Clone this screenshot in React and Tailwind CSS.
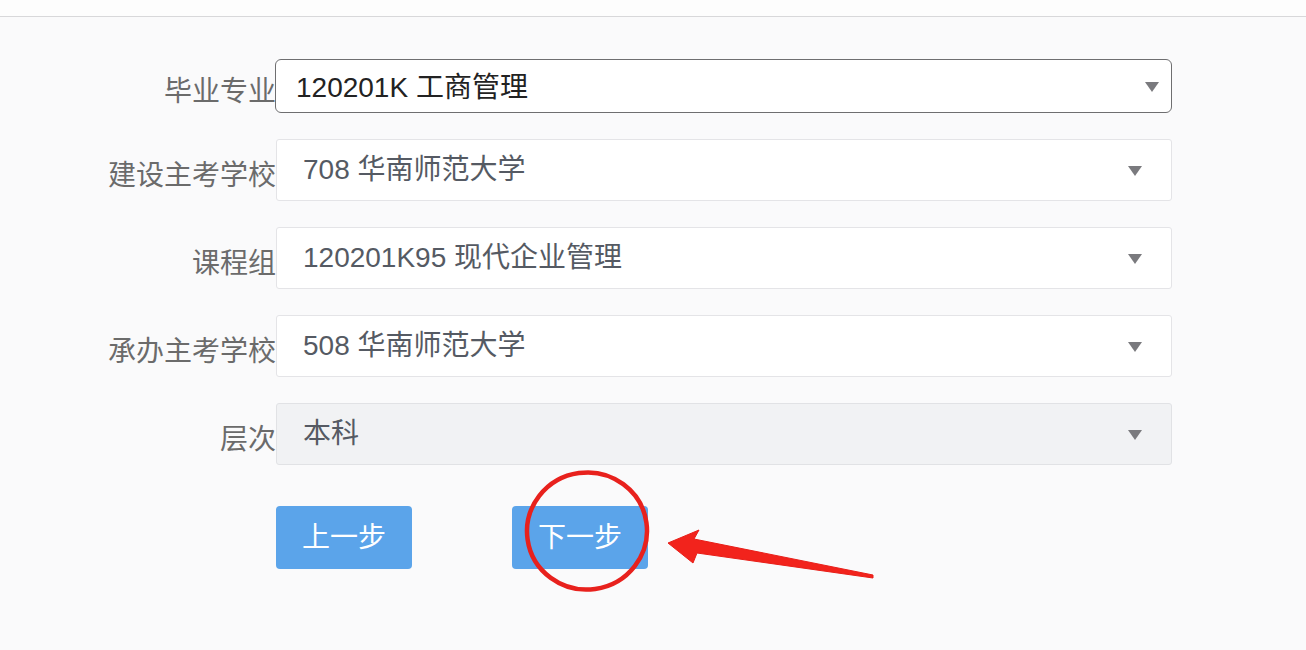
import React from "react";

const font = { fontFamily: '"Liberation Sans", "Noto Sans CJK SC", sans-serif' };

function Caret({ className }) {
  return (
    <svg className={className} width="14" height="10" viewBox="0 0 14 10">
      <path d="M0 0 L14 0 L7 10 Z" fill="#7a7a7e" />
    </svg>
  );
}

function Row({ label, value, variant }) {
  const first = variant === "first";
  const disabled = variant === "disabled";
  return (
    <div className="flex items-center">
      <div className="w-[276px] shrink-0 text-right text-[28px] leading-none text-[#6b6b6b] mt-[12px] whitespace-nowrap overflow-visible">
        {label}
      </div>
      <div
        className={
          first
            ? "relative z-10 -ml-[1px] w-[897px] h-[54px] flex items-center justify-between pl-[20px] pr-[12px] bg-white border border-[#6e6e70] rounded-[6px]"
            : disabled
            ? "w-[896px] h-[62px] flex items-center justify-between pl-[26px] pr-[29px] bg-[#f1f2f4] border border-[#e1e2e5] rounded-[3px]"
            : "w-[896px] h-[62px] flex items-center justify-between pl-[26px] pr-[29px] bg-white border border-[#e4e4e7] rounded-[3px]"
        }
      >
        <span
          className={
            first
              ? "mt-[3px] text-[28px] leading-none text-[#222222]"
              : "text-[28px] leading-none text-[#555a63]"
          }
        >
          {value}
        </span>
        <Caret className={first ? "mt-[2px]" : "mt-[1px]"} />
      </div>
    </div>
  );
}

export default function App() {
  return (
    <div className="relative w-[1306px] h-[650px] overflow-hidden bg-[#fafafb]" style={font}>
      <div className="h-[17px] bg-[#fdfdfd] border-b border-[#d8d8da]" />
      <div className="pt-[42px] flex flex-col gap-[26px]">
        <Row label="毕业专业" value="120201K 工商管理" variant="first" />
        <Row label="建设主考学校" value="708 华南师范大学" />
        <Row label="课程组" value="120201K95 现代企业管理" />
        <Row label="承办主考学校" value="508 华南师范大学" />
        <Row label="层次" value="本科" variant="disabled" />
      </div>
      <div className="flex gap-[100px] pl-[276px] pt-[41px]">
        <button className="w-[136px] h-[63px] rounded-[4px] bg-[#5ba4ea] text-white text-[28px] leading-none flex items-center justify-center">
          上一步
        </button>
        <button className="w-[136px] h-[63px] rounded-[4px] bg-[#5ba4ea] text-white text-[28px] leading-none flex items-center justify-center">
          下一步
        </button>
      </div>
      <svg
        className="absolute left-0 top-0 pointer-events-none"
        width="1306"
        height="650"
        viewBox="0 0 1306 650"
      >
        <ellipse
          cx="587"
          cy="531"
          rx="60"
          ry="58.5"
          fill="none"
          stroke="#e8211d"
          strokeWidth="4.5"
          transform="rotate(-8 587 531)"
        />
        <polygon
          points="668,543 699,530 694,539 873,575 873,578 697,553 693,563"
          fill="#f2231c"
          stroke="#e81e18"
          strokeWidth="1"
          strokeLinejoin="round"
        />
      </svg>
    </div>
  );
}
